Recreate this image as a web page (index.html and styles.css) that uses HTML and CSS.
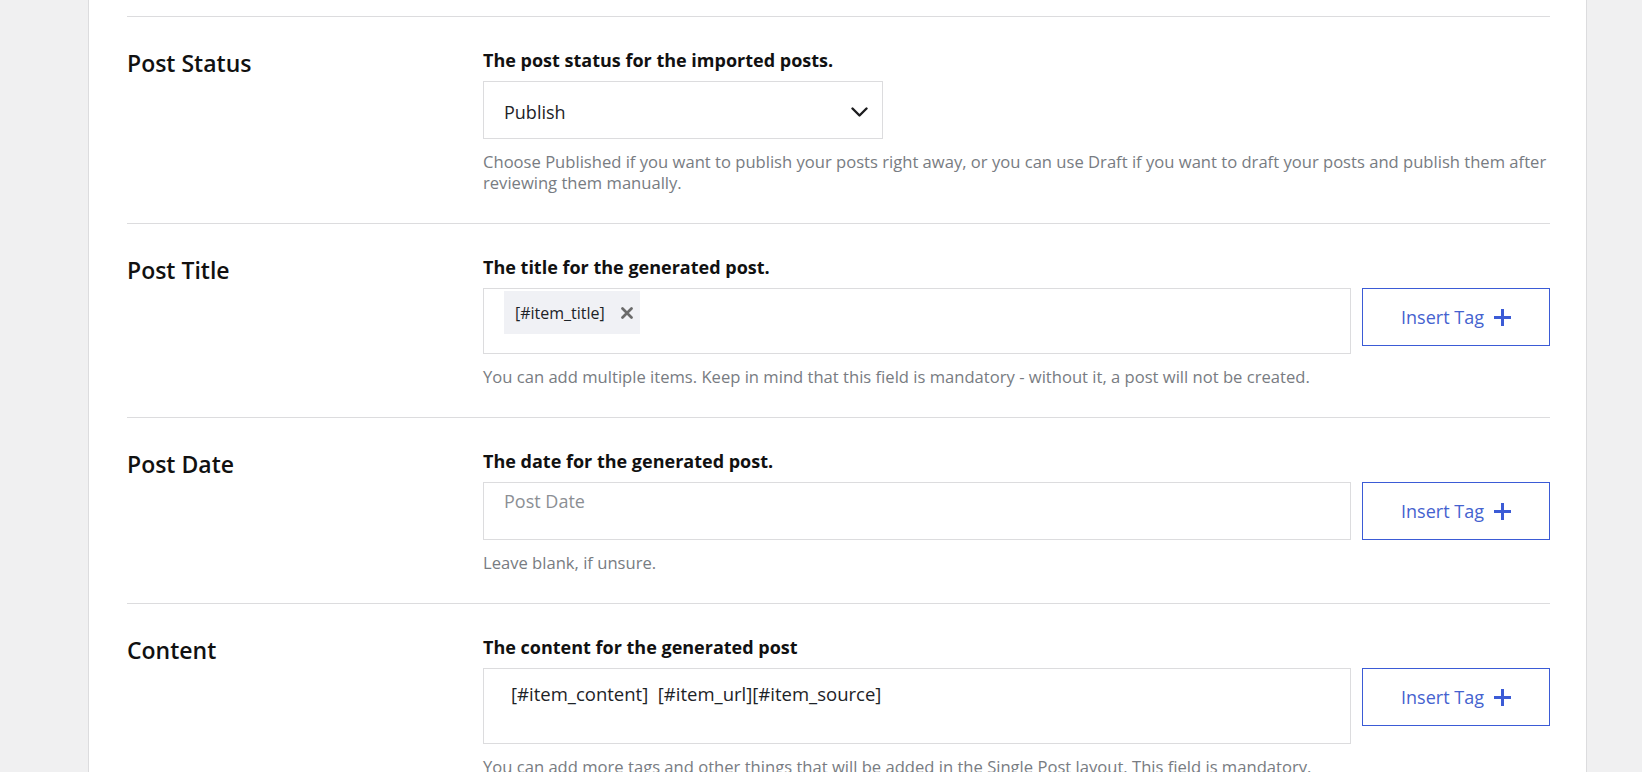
FILE: index.html
```html
<!DOCTYPE html>
<html lang="en">
<head>
<meta charset="utf-8">
<title>Import Settings</title>
<link rel="stylesheet" href="styles.css">
</head>
<body>
<div class="card">
  <section class="row">
    <h2 class="row-title">Post Status</h2>
    <div class="row-body">
      <div class="field-label">The post status for the imported posts.</div>
      <div class="select">
        <span>Publish</span>
        <svg class="chevron" width="17" height="10" viewBox="0 0 17 10"><polyline points="1.5,1.5 8.5,8.5 15.5,1.5" fill="none" stroke="#1d1d1f" stroke-width="2.4" stroke-linecap="round" stroke-linejoin="round"/></svg>
      </div>
      <p class="help">Choose Published if you want to publish your posts right away, or you can use Draft if you want to draft your posts and publish them after reviewing them manually.</p>
    </div>
  </section>

  <section class="row">
    <h2 class="row-title">Post Title</h2>
    <div class="row-body">
      <div class="field-label">The title for the generated post.</div>
      <div class="field-line">
        <div class="tag-input tag-input-chips">
          <span class="chip">[#item_title]
            <svg class="chip-x" width="12" height="12" viewBox="0 0 12 12"><path d="M1.5 1.5 L10.5 10.5 M10.5 1.5 L1.5 10.5" stroke="#6a6a6a" stroke-width="2.7" stroke-linecap="round"/></svg>
          </span>
        </div>
        <button class="insert-btn" type="button">Insert Tag
          <svg width="17" height="17" viewBox="0 0 17 17"><path d="M8.5 0 V17 M0 8.5 H17" stroke="#3b5bd6" stroke-width="3"/></svg>
        </button>
      </div>
      <p class="help">You can add multiple items. Keep in mind that this field is mandatory - without it, a post will not be created.</p>
    </div>
  </section>

  <section class="row">
    <h2 class="row-title">Post Date</h2>
    <div class="row-body">
      <div class="field-label">The date for the generated post.</div>
      <div class="field-line">
        <div class="tag-input tag-input-date"><span class="placeholder">Post Date</span></div>
        <button class="insert-btn" type="button">Insert Tag
          <svg width="17" height="17" viewBox="0 0 17 17"><path d="M8.5 0 V17 M0 8.5 H17" stroke="#3b5bd6" stroke-width="3"/></svg>
        </button>
      </div>
      <p class="help">Leave blank, if unsure.</p>
    </div>
  </section>

  <section class="row">
    <h2 class="row-title">Content</h2>
    <div class="row-body">
      <div class="field-label">The content for the generated post</div>
      <div class="field-line">
        <div class="tag-input tag-input-content">[#item_content]&nbsp; [#item_url][#item_source]</div>
        <button class="insert-btn" type="button">Insert Tag
          <svg width="17" height="17" viewBox="0 0 17 17"><path d="M8.5 0 V17 M0 8.5 H17" stroke="#3b5bd6" stroke-width="3"/></svg>
        </button>
      </div>
      <p class="help">You can add more tags and other things that will be added in the Single Post layout. This field is mandatory.</p>
    </div>
  </section>
</div>
</body>
</html>
```

FILE: styles.css
```css
* {
  box-sizing: border-box;
}

html, body {
  margin: 0;
  padding: 0;
}

body {
  background: #f0f0f1;
  font-family: "Open Sans", "Noto Sans", sans-serif;
  color: #1d2327;
  overflow: hidden;
}

.card {
  margin-left: 88px;
  width: 1499px;
  min-height: 100vh;
  background: #fff;
  border-left: 1px solid #dcdcde;
  border-right: 1px solid #dcdcde;
  padding: 16px 36px 0 38px;
}

.row {
  display: grid;
  grid-template-columns: 356px 1fr;
  border-top: 1px solid #dcdcde;
  padding: 31px 0 30px;
}

.row-title {
  margin: 0;
  font-size: 23px;
  line-height: 30px;
  font-weight: 600;
  color: #111;
}

.row-body {
  min-width: 0;
}

.field-label {
  font-size: 18px;
  line-height: 24px;
  font-weight: 700;
  color: #111;
  margin-bottom: 9px;
}

.select {
  width: 400px;
  height: 58px;
  border: 1px solid #dcdcde;
  display: flex;
  align-items: center;
  justify-content: space-between;
  padding: 3px 14px 0 20px;
  font-size: 18px;
  color: #1d2327;
}

.help {
  margin: 12px 0 0;
  font-size: 16.6px;
  line-height: 21px;
  color: #787c82;
}

.field-line {
  display: flex;
  align-items: flex-start;
  gap: 11px;
}

.tag-input {
  flex: 1;
  border: 1px solid #dcdcde;
  line-height: 24px;
  color: #1d2327;
}

.tag-input-chips {
  height: 66px;
  padding: 2px 20px;
  font-size: 16px;
}

.chip {
  display: inline-flex;
  align-items: center;
  gap: 16px;
  height: 43px;
  padding: 0 7px 0 11px;
  background: #f0f1f5;
}

.chip-x {
  display: block;
}

.tag-input-date {
  height: 58px;
  padding: 6px 20px;
  font-size: 18px;
}

.placeholder {
  color: #8c8f94;
}

.tag-input-content {
  height: 76px;
  padding: 13px 20px 0 27px;
  font-size: 18.5px;
  white-space: nowrap;
}

.insert-btn {
  flex: none;
  width: 188px;
  height: 58px;
  border: 1px solid #3b5bd6;
  background: #fff;
  color: #4562cf;
  font-family: inherit;
  font-size: 18px;
  display: flex;
  align-items: center;
  justify-content: center;
  gap: 10px;
  padding: 0;
  cursor: pointer;
}

.insert-btn svg {
  display: block;
}
```
